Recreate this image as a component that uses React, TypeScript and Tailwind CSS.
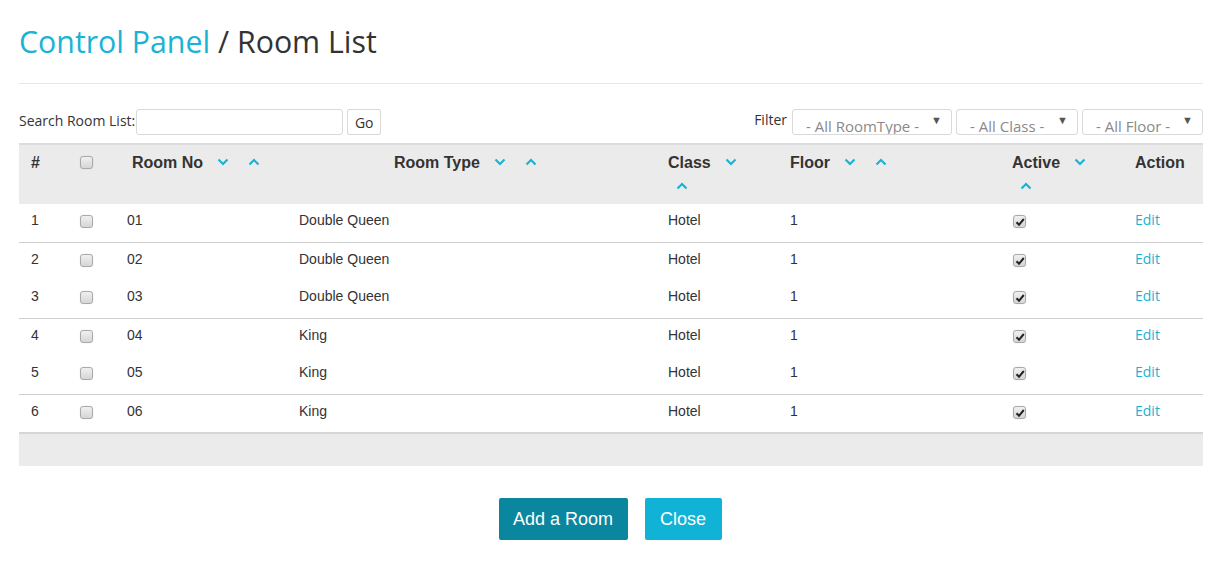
import React from "react";

const rows = [
  { n: 1, no: "01", type: "Double Queen", line: false },
  { n: 2, no: "02", type: "Double Queen", line: true },
  { n: 3, no: "03", type: "Double Queen", line: false },
  { n: 4, no: "04", type: "King", line: true },
  { n: 5, no: "05", type: "King", line: false },
  { n: 6, no: "06", type: "King", line: true },
];

const cols = "grid grid-cols-[49px_47px_172px_369px_122px_223px_122px_80px]";

const Chevron = ({ up }: { up?: boolean }) => (
  <svg
    viewBox="0 0 12 8"
    className="inline-block w-[12px] h-[8px] text-[#1ab3d4] align-middle"
  >
    <path
      d={up ? "M1.5 6.5 L6 2 L10.5 6.5" : "M1.5 1.5 L6 6 L10.5 1.5"}
      fill="none"
      stroke="currentColor"
      strokeWidth="2.2"
    />
  </svg>
);

const Sort = ({ wrap }: { wrap?: boolean }) => (
  <>
    <span className="inline-block ml-[14px] relative -top-[2px]">
      <Chevron />
    </span>
    {wrap ? <br /> : null}
    <span className={`inline-block relative -top-[2px] ${wrap ? "ml-[8px]" : "ml-[19px]"}`}>
      <Chevron up />
    </span>
  </>
);

const Box = ({ checked }: { checked?: boolean }) => (
  <span className="flex items-center justify-center w-[13px] h-[13px] rounded-[3px] border border-[#a9a9a9] bg-gradient-to-b from-[#f0f0f0] to-[#d6d6d6] shadow-[0_0_1px_rgba(0,0,0,0.2)]">
    {checked ? (
      <svg viewBox="0 0 10 10" className="w-[10px] h-[10px]">
        <path d="M1.5 5.2 L4 7.8 L8.8 2" fill="none" stroke="#222" strokeWidth="2" />
      </svg>
    ) : null}
  </span>
);

const Select = ({ label, w }: { label: string; w: string }) => (
  <div
    className={`${w} h-[26px] border border-[#d9d9d9] rounded-[3px] bg-white flex items-start justify-between pl-[13px] pr-[9px] overflow-hidden`}
  >
    <span className="text-[15px] text-[#8a8a8a] leading-[18px] pt-[7px]">{label}</span>
    <span className="text-[11px] text-[#555] leading-none pt-[4px]">▼</span>
  </div>
);

export default function App() {
  return (
    <div className="bg-white min-h-[561px] pl-[19px] text-[#333] font-['Open_Sans',sans-serif]">
      <div className="w-[1184px]">
        <h1 className="pt-[21px] text-[30.3px] leading-[42px] pb-[20px] border-b border-[#e6e6e6]">
          <span className="text-[#1ab3d4]">Control Panel</span>
          <span className="text-[#333]"> / Room List</span>
        </h1>

        <div className="flex items-start justify-between pt-[25px] h-[59px]">
          <div className="flex items-start">
            <span className="text-[14px] leading-[18px] mt-[3px] mr-[1px]">Search Room List:</span>
            <input className="w-[207px] h-[26px] border border-[#d9d9d9] rounded-[3px] outline-none" />
            <button className="ml-[4px] w-[34px] h-[26px] border border-[#d9d9d9] rounded-[2px] bg-white text-[14px] leading-none pt-[2px]">
              Go
            </button>
          </div>
          <div className="flex items-start gap-[4px]">
            <span className="text-[14px] leading-[18px] mt-[2px] mr-[1px]">Filter</span>
            <Select label="- All RoomType -" w="w-[160px]" />
            <Select label="- All Class -" w="w-[122px]" />
            <Select label="- All Floor -" w="w-[121px]" />
          </div>
        </div>

        <div className="font-['Liberation_Sans',Arial,sans-serif] text-[#333]">
          <div className={`${cols} h-[61px] bg-[#ebebeb] border-t-2 border-[#dcdcdc] text-[16px] font-bold leading-[24px]`}>
            <div className="pl-[12px] pt-[6px]">#</div>
            <div className="pl-[12px] pt-[11px]">
              <Box />
            </div>
            <div className="pl-[17px] pt-[6px]">
              Room No
              <Sort />
            </div>
            <div className="pl-[107px] pt-[6px]">
              Room Type
              <Sort />
            </div>
            <div className="pl-[12px] pt-[6px]">
              Class
              <Sort wrap />
            </div>
            <div className="pl-[12px] pt-[6px]">
              Floor
              <Sort />
            </div>
            <div className="pl-[11px] pt-[6px]">
              Active
              <Sort wrap />
            </div>
            <div className="pl-[12px] pt-[6px]">Action</div>
          </div>

          {rows.map((r) => (
            <div
              key={r.n}
              className={`${cols} h-[38px] text-[14px] leading-[20px] ${r.line ? "border-t border-[#cfcfcf]" : ""}`}
            >
              <div className="pl-[12px] pt-[6px]">{r.n}</div>
              <div className="pl-[12px] pt-[11px]">
                <Box />
              </div>
              <div className="pl-[12px] pt-[6px]">{r.no}</div>
              <div className="pl-[12px] pt-[6px]">{r.type}</div>
              <div className="pl-[12px] pt-[6px]">Hotel</div>
              <div className="pl-[12px] pt-[6px]">1</div>
              <div className="pl-[12px] pt-[11px]">
                <Box checked />
              </div>
              <div className="pl-[12px] pt-[6px] font-['Open_Sans',sans-serif] text-[#1ab3d4]">
                Edit
              </div>
            </div>
          ))}

          <div className="h-[34px] bg-[#ebebeb] border-t-2 border-[#d6d6d6]" />

          <div className="flex justify-center gap-[17px] pt-[32px] pr-[2px]">
            <button className="w-[129px] h-[42px] rounded-[2px] bg-[#0a869e] text-white text-[18px]">
              Add a Room
            </button>
            <button className="w-[77px] h-[42px] rounded-[2px] bg-[#10b3d5] text-white text-[18px]">
              Close
            </button>
          </div>
        </div>
      </div>
    </div>
  );
}
